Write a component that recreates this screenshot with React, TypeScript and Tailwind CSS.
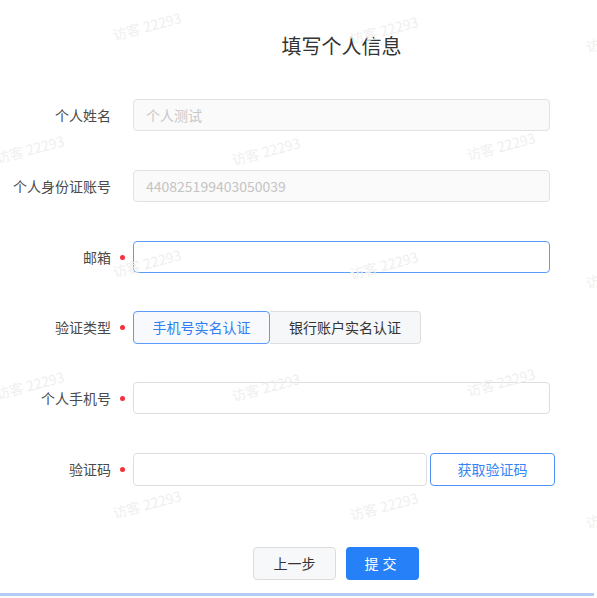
const marks = [
  { x: 113, y: 14 },
  { x: 350, y: 18 },
  { x: 586, y: 26 },
  { x: -4, y: 137 },
  { x: 232, y: 139 },
  { x: 467, y: 134 },
  { x: 113, y: 251 },
  { x: 350, y: 253 },
  { x: 586, y: 262 },
  { x: -4, y: 373 },
  { x: 232, y: 375 },
  { x: 467, y: 370 },
  { x: 113, y: 492 },
  { x: 350, y: 494 },
  { x: 586, y: 502 },
]

function Label({ text, required }: { text: string; required?: boolean }) {
  return (
    <div className="flex w-[133px] shrink-0 items-center justify-end">
      <span className="text-[14px] text-[#4a4a4a]">{text}</span>
      <span className="flex w-[22px] items-center pl-[9px]">
        {required && <span className="h-[5px] w-[5px] rounded-full bg-[#f5323c]" />}
      </span>
    </div>
  )
}

export default function App() {
  return (
    <div className="relative h-[598px] w-[597px] overflow-hidden bg-white font-['Noto_Sans_CJK_SC',sans-serif]">
      <div className="pt-[31px]">
        <div className="ml-[133px] w-[417px] text-center text-[20px] leading-[30px] text-[#333]">填写个人信息</div>

        <div className="mt-[38px] flex h-[32px] items-center">
          <Label text="个人姓名" />
          <input
            readOnly
            placeholder="个人测试"
            className="h-[32px] w-[417px] rounded-[4px] border border-[#e2e2e2] bg-[#fafafa] px-[12px] text-[14px] text-[#c4c4c4] outline-none placeholder:text-[#c8c8c8]"
          />
        </div>
        <div className="mt-[39px] flex h-[32px] items-center">
          <Label text="个人身份证账号" />
          <input
            readOnly
            value="440825199403050039"
            className="h-[32px] w-[417px] rounded-[4px] border border-[#e2e2e2] bg-[#fafafa] px-[12px] text-[14px] text-[#c4c4c4] outline-none"
          />
        </div>
        <div className="mt-[39px] flex h-[32px] items-center">
          <Label text="邮箱" required />
          <input className="h-[32px] w-[417px] rounded-[4px] border border-[#5c9cf8] bg-white px-[12px] text-[14px] outline-none" />
        </div>
        <div className="mt-[38px] flex h-[33px] items-center">
          <Label text="验证类型" required />
          <div className="flex">
            <button className="h-[33px] w-[137px] rounded-[4px] border border-[#5c9cf8] bg-[#f7f9fc] text-[14px] text-[#2f7ff3]">
              手机号实名认证
            </button>
            <button className="h-[33px] w-[151px] rounded-r-[4px] border border-l-0 border-[#dedede] bg-[#f6f7f9] text-[14px] text-[#333]">
              银行账户实名认证
            </button>
          </div>
        </div>
        <div className="mt-[38px] flex h-[32px] items-center">
          <Label text="个人手机号" required />
          <input className="h-[32px] w-[417px] rounded-[4px] border border-[#dedede] bg-white px-[12px] text-[14px] outline-none" />
        </div>
        <div className="mt-[39px] flex h-[33px] items-center">
          <Label text="验证码" required />
          <input className="h-[33px] w-[294px] rounded-[4px] border border-[#dedede] bg-white px-[12px] text-[14px] outline-none" />
          <button className="ml-[3px] h-[33px] w-[125px] rounded-[4px] border border-[#4f92f7] bg-white text-[14px] text-[#3584f5]">
            获取验证码
          </button>
        </div>

        <div className="ml-[253px] mt-[61px] flex gap-[10px]">
          <button className="h-[33px] w-[83px] rounded-[4px] border border-[#dcdcdc] bg-[#f7f8fa] text-[14px] text-[#333]">
            上一步
          </button>
          <button className="h-[33px] w-[73px] rounded-[4px] bg-[#2680f7] text-[14px] tracking-[4px] text-white">
            提交
          </button>
        </div>

        <div className="mt-[13px] h-[3px] w-[594px] bg-[#b4cdf6]" />
      </div>

      <div className="pointer-events-none absolute inset-0">
        {marks.map((m, i) => (
          <span
            key={i}
            className="absolute origin-left -rotate-[15deg] whitespace-nowrap text-[14px] leading-none text-[#efefef]"
            style={{ left: m.x, top: m.y + 14 }}
          >
            访客 22293
          </span>
        ))}
      </div>
    </div>
  )
}
